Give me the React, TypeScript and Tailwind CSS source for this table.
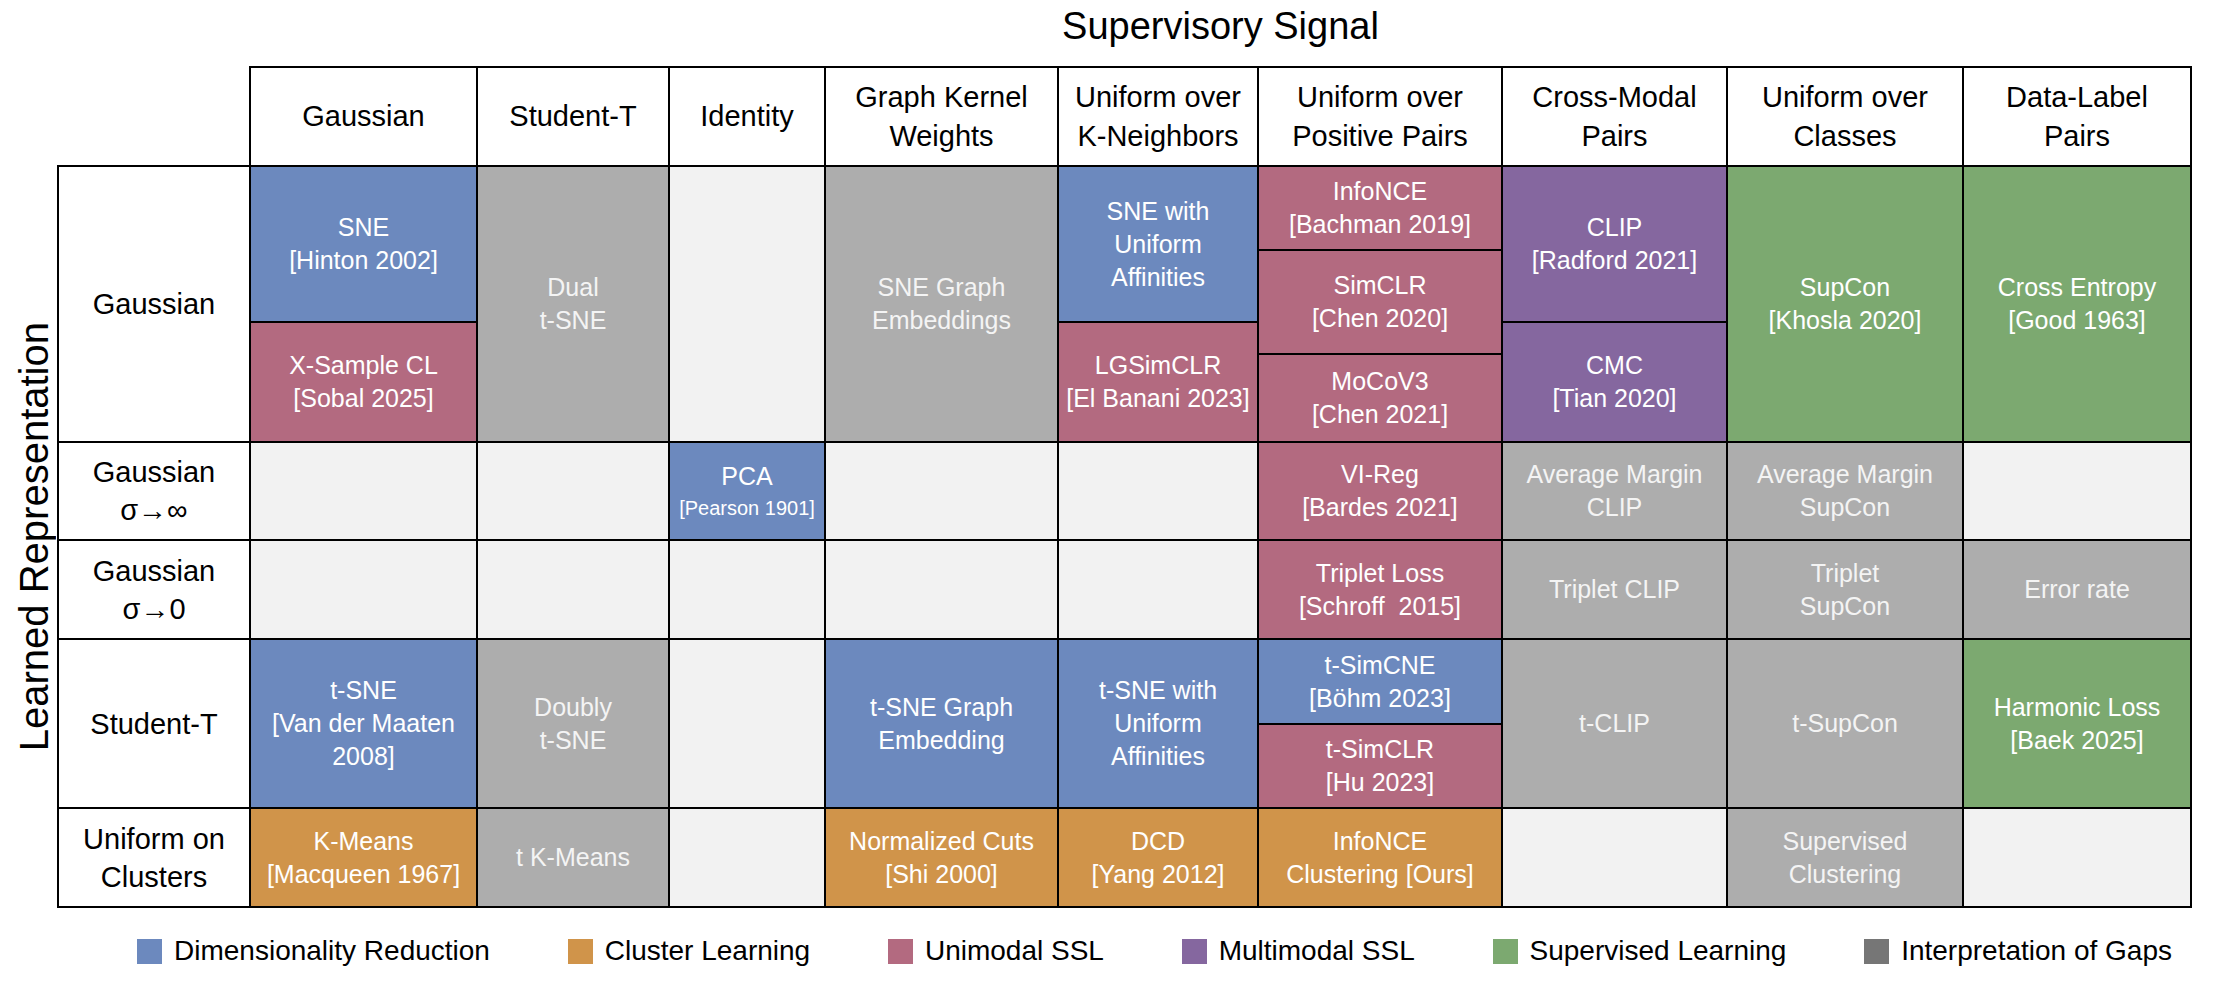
type Kind = 'dr' | 'cl' | 'uni' | 'multi' | 'sup' | 'gap' | 'none';

type Cell = {
  c: number;
  r: number;
  span?: number;
  kind: Kind;
  lines?: string[];
  smallCite?: boolean;
};

const BG: Record<Kind, string> = {
  dr: 'bg-[#6C89BE] text-white',
  cl: 'bg-[#D0944A] text-white',
  uni: 'bg-[#B36A80] text-white',
  multi: 'bg-[#85679F] text-white',
  sup: 'bg-[#7CA970] text-white',
  gap: 'bg-[#ADADAD] text-[#F4F4F4]',
  none: 'bg-[#F2F2F2]',
};

const COL_START: Record<number, string> = {
  1: 'col-start-1',
  2: 'col-start-2',
  3: 'col-start-3',
  4: 'col-start-4',
  5: 'col-start-5',
  6: 'col-start-6',
  7: 'col-start-7',
  8: 'col-start-8',
  9: 'col-start-9',
  10: 'col-start-10',
};

const ROW_START: Record<number, string> = {
  1: 'row-start-1',
  2: 'row-start-2',
  3: 'row-start-3',
  4: 'row-start-4',
  5: 'row-start-5',
  6: 'row-start-6',
  7: 'row-start-7',
  8: 'row-start-8',
  9: 'row-start-9',
};

const ROW_SPAN: Record<number, string> = {
  1: 'row-span-1',
  2: 'row-span-2',
  4: 'row-span-4',
};

const HEADERS = [
  ['Gaussian'],
  ['Student-T'],
  ['Identity'],
  ['Graph Kernel', 'Weights'],
  ['Uniform over', 'K-Neighbors'],
  ['Uniform over', 'Positive Pairs'],
  ['Cross-Modal', 'Pairs'],
  ['Uniform over', 'Classes'],
  ['Data-Label', 'Pairs'],
];

// row header column: rows 1-4 gaussian, 5 sigma->inf, 6 sigma->0, 7-8 student-t, 9 clusters
const ROW_HEADERS: { r: number; span: number; lines: string[] }[] = [
  { r: 1, span: 4, lines: ['Gaussian'] },
  { r: 5, span: 1, lines: ['Gaussian', 'σ→∞'] },
  { r: 6, span: 1, lines: ['Gaussian', 'σ→0'] },
  { r: 7, span: 2, lines: ['Student-T'] },
  { r: 9, span: 1, lines: ['Uniform on', 'Clusters'] },
];

const CELLS: Cell[] = [
  // Gaussian
  { c: 2, r: 1, span: 2, kind: 'dr', lines: ['SNE', '[Hinton 2002]'] },
  { c: 2, r: 3, span: 2, kind: 'uni', lines: ['X-Sample CL', '[Sobal 2025]'] },
  { c: 2, r: 5, kind: 'none' },
  { c: 2, r: 6, kind: 'none' },
  { c: 2, r: 7, span: 2, kind: 'dr', lines: ['t-SNE', '[Van der Maaten', '2008]'] },
  { c: 2, r: 9, kind: 'cl', lines: ['K-Means', '[Macqueen 1967]'] },
  // Student-T
  { c: 3, r: 1, span: 4, kind: 'gap', lines: ['Dual', 't-SNE'] },
  { c: 3, r: 5, kind: 'none' },
  { c: 3, r: 6, kind: 'none' },
  { c: 3, r: 7, span: 2, kind: 'gap', lines: ['Doubly', 't-SNE'] },
  { c: 3, r: 9, kind: 'gap', lines: ['t K-Means'] },
  // Identity
  { c: 4, r: 1, span: 4, kind: 'none' },
  { c: 4, r: 5, kind: 'dr', lines: ['PCA', '[Pearson 1901]'], smallCite: true },
  { c: 4, r: 6, kind: 'none' },
  { c: 4, r: 7, span: 2, kind: 'none' },
  { c: 4, r: 9, kind: 'none' },
  // Graph kernel
  { c: 5, r: 1, span: 4, kind: 'gap', lines: ['SNE Graph', 'Embeddings'] },
  { c: 5, r: 5, kind: 'none' },
  { c: 5, r: 6, kind: 'none' },
  { c: 5, r: 7, span: 2, kind: 'dr', lines: ['t-SNE Graph', 'Embedding'] },
  { c: 5, r: 9, kind: 'cl', lines: ['Normalized Cuts', '[Shi 2000]'] },
  // K-neighbors
  { c: 6, r: 1, span: 2, kind: 'dr', lines: ['SNE with', 'Uniform', 'Affinities'] },
  { c: 6, r: 3, span: 2, kind: 'uni', lines: ['LGSimCLR', '[El Banani 2023]'] },
  { c: 6, r: 5, kind: 'none' },
  { c: 6, r: 6, kind: 'none' },
  { c: 6, r: 7, span: 2, kind: 'dr', lines: ['t-SNE with', 'Uniform', 'Affinities'] },
  { c: 6, r: 9, kind: 'cl', lines: ['DCD', '[Yang 2012]'] },
  // Positive pairs
  { c: 7, r: 1, kind: 'uni', lines: ['InfoNCE', '[Bachman 2019]'] },
  { c: 7, r: 2, span: 2, kind: 'uni', lines: ['SimCLR', '[Chen 2020]'] },
  { c: 7, r: 4, kind: 'uni', lines: ['MoCoV3', '[Chen 2021]'] },
  { c: 7, r: 5, kind: 'uni', lines: ['VI-Reg', '[Bardes 2021]'] },
  { c: 7, r: 6, kind: 'uni', lines: ['Triplet Loss', '[Schroff\u00a0 2015]'] },
  { c: 7, r: 7, kind: 'dr', lines: ['t-SimCNE', '[Böhm 2023]'] },
  { c: 7, r: 8, kind: 'uni', lines: ['t-SimCLR', '[Hu 2023]'] },
  { c: 7, r: 9, kind: 'cl', lines: ['InfoNCE', 'Clustering [Ours]'] },
  // Cross-modal
  { c: 8, r: 1, span: 2, kind: 'multi', lines: ['CLIP', '[Radford 2021]'] },
  { c: 8, r: 3, span: 2, kind: 'multi', lines: ['CMC', '[Tian 2020]'] },
  { c: 8, r: 5, kind: 'gap', lines: ['Average Margin', 'CLIP'] },
  { c: 8, r: 6, kind: 'gap', lines: ['Triplet CLIP'] },
  { c: 8, r: 7, span: 2, kind: 'gap', lines: ['t-CLIP'] },
  { c: 8, r: 9, kind: 'none' },
  // Classes
  { c: 9, r: 1, span: 4, kind: 'sup', lines: ['SupCon', '[Khosla 2020]'] },
  { c: 9, r: 5, kind: 'gap', lines: ['Average Margin', 'SupCon'] },
  { c: 9, r: 6, kind: 'gap', lines: ['Triplet', 'SupCon'] },
  { c: 9, r: 7, span: 2, kind: 'gap', lines: ['t-SupCon'] },
  { c: 9, r: 9, kind: 'gap', lines: ['Supervised', 'Clustering'] },
  // Data-label
  { c: 10, r: 1, span: 4, kind: 'sup', lines: ['Cross Entropy', '[Good 1963]'] },
  { c: 10, r: 5, kind: 'none' },
  { c: 10, r: 6, kind: 'gap', lines: ['Error rate'] },
  { c: 10, r: 7, span: 2, kind: 'sup', lines: ['Harmonic Loss', '[Baek 2025]'] },
  { c: 10, r: 9, kind: 'none' },
];

const LEGEND = [
  { label: 'Dimensionality Reduction', color: 'bg-[#6C89BE]' },
  { label: 'Cluster Learning', color: 'bg-[#D0944A]' },
  { label: 'Unimodal SSL', color: 'bg-[#B36A80]' },
  { label: 'Multimodal SSL', color: 'bg-[#85679F]' },
  { label: 'Supervised Learning', color: 'bg-[#7CA970]' },
  { label: 'Interpretation of Gaps', color: 'bg-[#767676]' },
];

function MethodCell({ cell }: { cell: Cell }) {
  const span = cell.span ?? 1;
  return (
    <div
      className={`${COL_START[cell.c]} ${ROW_START[cell.r]} ${ROW_SPAN[span]} ${BG[cell.kind]} flex flex-col items-center justify-center text-center text-[25px] leading-[33px]`}
    >
      {cell.lines?.map((line, i) => (
        <div
          key={i}
          className={`whitespace-nowrap ${cell.smallCite && i > 0 ? 'text-[20px] leading-[30px]' : ''}`}
        >
          {line}
        </div>
      ))}
    </div>
  );
}

export default function App() {
  return (
    <div className="w-[2224px] h-[984px] bg-white font-['Liberation_Sans',Arial,sans-serif] text-black overflow-hidden">
      <div className="ml-[249px] w-[1943px] mt-[4px] mb-[18px] text-center text-[38px] leading-[44px]">
        Supervisory Signal
      </div>

      {/* column headers */}
      <div className="ml-[249px] w-fit grid grid-cols-[225px_190px_154px_231px_198px_242px_223px_234px_226px] grid-rows-[97px] gap-[2px] bg-black pt-[2px] px-[2px]">
        {HEADERS.map((lines, i) => (
          <div key={i} className="bg-white flex flex-col items-center justify-center text-center text-[29px] leading-[39px]">
            {lines.map((l) => (
              <div key={l} className="whitespace-nowrap">{l}</div>
            ))}
          </div>
        ))}
      </div>

      <div className="flex">
        <div className="w-[57px] flex items-center justify-end">
          <div className="[writing-mode:vertical-rl] rotate-180 text-[40px] leading-[46px] whitespace-nowrap">
            Learned Representation
          </div>
        </div>

        <div className="grid w-fit grid-cols-[190px_225px_190px_154px_231px_198px_242px_223px_234px_226px] grid-rows-[82px_70px_30px_86px_96px_97px_83px_82px_97px] gap-[2px] bg-black p-[2px]">
          {ROW_HEADERS.map((h) => (
            <div
              key={h.r}
              className={`col-start-1 ${ROW_START[h.r]} ${ROW_SPAN[h.span]} bg-white flex flex-col items-center justify-center text-center text-[29px] leading-[38px]`}
            >
              {h.lines.map((l) => (
                <div key={l} className="whitespace-nowrap">{l}</div>
              ))}
            </div>
          ))}
          {CELLS.map((cell) => (
            <MethodCell key={`${cell.c}-${cell.r}`} cell={cell} />
          ))}
        </div>
      </div>

      {/* legend */}
      <div className="ml-[137px] w-[2035px] mt-[26px] flex justify-between items-center text-[28px] leading-[34px]">
        {LEGEND.map((item) => (
          <div key={item.label} className="flex items-center gap-[12px]">
            <span className={`w-[25px] h-[25px] ${item.color}`} />
            <span className="whitespace-nowrap">{item.label}</span>
          </div>
        ))}
      </div>
    </div>
  );
}
